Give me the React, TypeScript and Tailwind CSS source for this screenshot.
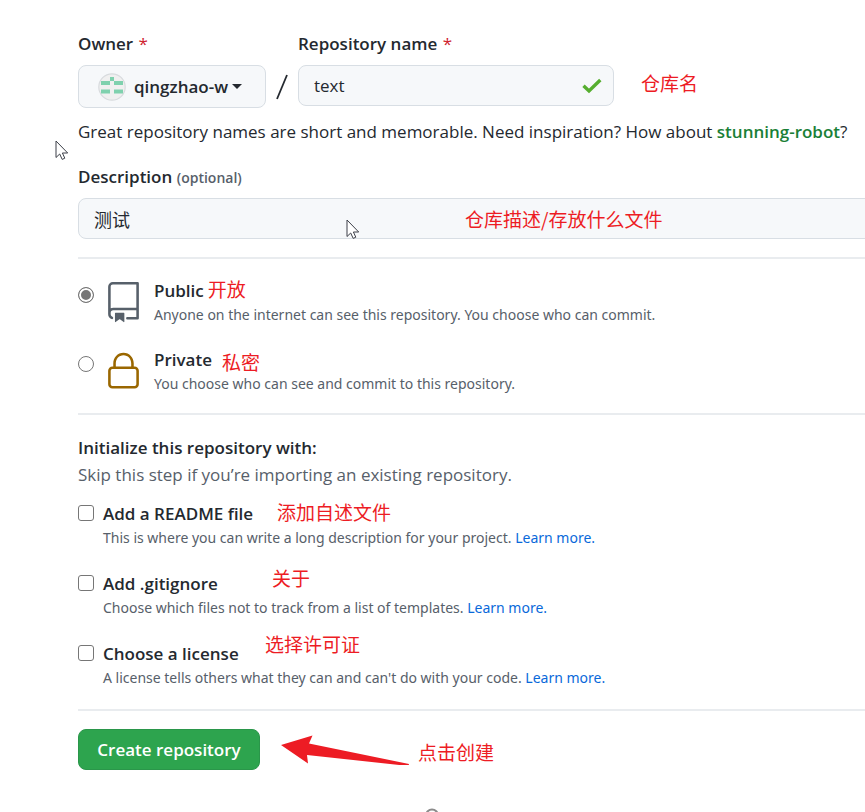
import React, { useState } from 'react';
import clsx from 'clsx';

interface NoteProps {
  children: React.ReactNode;
  className?: string;
}

const VISIBILITIES = [
  {
    value: 'public',
    label: 'Public',
    description: 'Anyone on the internet can see this repository. You choose who can commit.',
    note: '开放',
    noteClass: 'ml-1 pb-1'
  },
  {
    value: 'private',
    label: 'Private',
    description: 'You choose who can see and commit to this repository.',
    note: '私密',
    noteClass: 'ml-[10px] pt-1'
  }
];

const INIT_OPTIONS = [
  {
    id: 'readme',
    label: 'Add a README file',
    description: 'This is where you can write a long description for your project.',
    note: '添加自述文件',
    noteClass: 'left-[174px] top-0'
  },
  {
    id: 'gitignore',
    label: 'Add .gitignore',
    description: 'Choose which files not to track from a list of templates.',
    note: '关于',
    noteClass: 'left-[169px] -top-1'
  },
  {
    id: 'license',
    label: 'Choose a license',
    description: "A license tells others what they can and can't do with your code.",
    note: '选择许可证',
    noteClass: 'left-[162px] -top-2'
  }
];

const Note: React.FC<NoteProps> = ({ children, className }) => (
  <span
    className={clsx(
      'whitespace-nowrap font-["Noto_Sans_CJK_SC",sans-serif] text-[19px] leading-6 font-normal text-[#ed1c24]',
      className
    )}
  >
    {children}
  </span>
);

const Cursor: React.FC<{ className: string }> = ({ className }) => (
  <svg className={clsx('pointer-events-none absolute', className)} width="14" height="21" viewBox="0 0 14 21">
    <path
      d="M1 1v16.5l3.7-3.5 2.5 5.4 2.6-1.2-2.4-5.2h5.3z"
      fill="#fff"
      stroke="#3c3f48"
      strokeWidth="1"
      strokeLinejoin="round"
    />
  </svg>
);

const Avatar = () => (
  <svg width="28" height="28" viewBox="0 0 28 28" className="shrink-0">
    <circle cx="14" cy="14" r="13.2" fill="#f0f0f0" stroke="#d8dbde" strokeWidth="1.2" />
    <path d="M12 4h4v4h-4zM3 8h9v4H3zM16 8h9v4h-9zM3 16.5h9v4H3zM16 16.5h9v4h-9z" fill="#7fd1ae" />
  </svg>
);

const RepoIcon = () => (
  <svg width="41" height="41" viewBox="0 0 24 24" fill="#57606a">
    <path
      fillRule="evenodd"
      d="M3 2.75A2.75 2.75 0 015.75 0h14.5a.75.75 0 01.75.75v20.5a.75.75 0 01-.75.75h-6a.75.75 0 010-1.5h5.25v-4H6A1.5 1.5 0 004.5 18v.75c0 .716.43 1.334 1.05 1.605a.75.75 0 01-.6 1.374A3.25 3.25 0 013 18.75v-16zM19.5 1.5V15H6c-.546 0-1.059.146-1.5.401V2.75c0-.69.56-1.25 1.25-1.25H19.5z"
    />
    <path d="M7 18.25a.25.25 0 01.25-.25h5a.25.25 0 01.25.25v5.01a.25.25 0 01-.397.201l-2.206-1.604a.25.25 0 00-.294 0L7.397 23.46a.25.25 0 01-.397-.2v-5.01z" />
  </svg>
);

const LockIcon = () => (
  <svg width="41" height="41" viewBox="0 0 24 24" fill="#9a6700">
    <path
      fillRule="evenodd"
      d="M6 9V7.25C6 3.845 8.503 1 12 1s6 2.845 6 6.25V9h.5a2.5 2.5 0 012.5 2.5v8a2.5 2.5 0 01-2.5 2.5h-13A2.5 2.5 0 013 19.5v-8A2.5 2.5 0 015.5 9H6zm1.5-1.75C7.5 4.58 9.422 2.5 12 2.5c2.578 0 4.5 2.08 4.5 4.75V9h-9V7.25zm-3 4.25a1 1 0 011-1h13a1 1 0 011 1v8a1 1 0 01-1 1h-13a1 1 0 01-1-1v-8z"
    />
  </svg>
);

export default function App() {
  const [name, setName] = useState('text');
  const [description, setDescription] = useState('测试');
  const [visibility, setVisibility] = useState('public');

  return (
    <main className='relative min-h-screen overflow-hidden bg-white pt-[30px] pl-[78px] font-["Open_Sans","Noto_Sans_CJK_SC",sans-serif] text-[17px] leading-[27px] text-[#24292f]'>
      <form onSubmit={e => e.preventDefault()}>
        <div className="flex items-start">
          <div className="w-[188px] shrink-0">
            <label htmlFor="owner" className="block font-semibold">
              Owner <span className="ml-px font-normal text-[#cf222e]">*</span>
            </label>
            <button
              id="owner"
              type="button"
              className="mt-2 flex h-[43px] w-full items-center rounded-lg border border-[#d8dee4] bg-[#f6f8fa] pl-[19px] font-semibold"
            >
              <Avatar />
              <span className="ml-2">qingzhao-w</span>
              <svg width="10" height="5" viewBox="0 0 10 5" className="ml-1 shrink-0">
                <path d="M0 0h10L5 5z" fill="#24292f" />
              </svg>
            </button>
          </div>

          <svg width="12" height="26" viewBox="0 0 12 26" className="mx-[10px] mt-11 shrink-0">
            <path d="M1 25L11 1" stroke="#24292f" strokeWidth="1.8" />
          </svg>

          <div className="w-[316px] shrink-0">
            <label htmlFor="name" className="block font-semibold">
              Repository name <span className="ml-px font-normal text-[#cf222e]">*</span>
            </label>
            <div className="relative mt-2">
              <input
                id="name"
                type="text"
                value={name}
                onChange={e => setName(e.target.value)}
                className="h-[41px] w-full rounded-lg border border-[#d8dee4] bg-[#f6f8fa] px-[15px]"
              />
              <svg width="20" height="16" viewBox="0 0 20 16" className="absolute top-[13px] right-3">
                <path d="M1.5 7.8L7 13 18.3 2" fill="none" stroke="#56ae2f" strokeWidth="3.4" />
              </svg>
            </div>
          </div>

          <Note className="mt-[41px] ml-[27px]">仓库名</Note>
        </div>

        <p className="mt-[10px] whitespace-nowrap">
          Great repository names are short and memorable. Need inspiration? How about{' '}
          <strong className="font-semibold text-[#1a7f37]">stunning-robot</strong>?
        </p>

        <label htmlFor="description" className="mt-[18px] block font-semibold">
          Description <span className="text-sm text-[#57606a]">(optional)</span>
        </label>
        <div className="relative mt-2 -mr-3">
          <input
            id="description"
            type="text"
            value={description}
            onChange={e => setDescription(e.target.value)}
            className="block h-[41px] w-full rounded-lg border border-[#d8dee4] bg-[#f6f8fa] px-[15px] text-lg"
          />
          <Note className="absolute top-[9px] left-[387px]">仓库描述/存放什么文件</Note>
        </div>

        <fieldset className="mt-[18px] border-t-2 border-[#e9ecef] pt-[18px]">
          <div className="flex flex-col gap-5">
            {VISIBILITIES.map(item => (
              <div key={item.value} className="flex items-start">
                <input
                  id={item.value}
                  type="radio"
                  name="visibility"
                  checked={visibility === item.value}
                  onChange={() => setVisibility(item.value)}
                  className="mt-[10px] size-4 shrink-0 appearance-none rounded-full border border-[#767676] bg-white checked:border-[#767676] checked:bg-[#767676] checked:shadow-[inset_0_0_0_2px_#fff]"
                />
                <div className="mt-[5px] ml-[9px] h-[43px] w-[41px] shrink-0">
                  {item.value === 'public' ? <RepoIcon /> : <LockIcon />}
                </div>
                <div className="ml-[10px] whitespace-nowrap">
                  <div className="flex h-[27px] items-center">
                    <label htmlFor={item.value} className="font-semibold">
                      {item.label}
                    </label>
                    <Note className={item.noteClass}>{item.note}</Note>
                  </div>
                  <p className='font-["Noto_Sans",sans-serif] text-sm leading-[22px] text-[#57606a]'>
                    {item.description}
                  </p>
                </div>
              </div>
            ))}
          </div>
        </fieldset>

        <section className="mt-[18px] border-t-2 border-[#e9ecef] pt-[19px]">
          <h2 className="font-semibold">Initialize this repository with:</h2>
          <p className="text-[#57606a]">Skip this step if you’re importing an existing repository.</p>
          <div className="mt-3 flex flex-col gap-[21px]">
            {INIT_OPTIONS.map(option => (
              <div key={option.id} className="flex items-start">
                <input
                  id={option.id}
                  type="checkbox"
                  className="mt-[5px] size-4 shrink-0 appearance-none rounded-[3px] border border-[#767676] bg-white checked:bg-[#0969da]"
                />
                <div className="relative ml-[9px] whitespace-nowrap">
                  <label htmlFor={option.id} className="block font-semibold">
                    {option.label}
                  </label>
                  <Note className={clsx('absolute', option.noteClass)}>{option.note}</Note>
                  <p className='font-["Noto_Sans",sans-serif] text-sm leading-[22px] text-[#57606a]'>
                    {option.description}{' '}
                    <a href="#" className="text-[#0969da]">
                      Learn more.
                    </a>
                  </p>
                </div>
              </div>
            ))}
          </div>
        </section>

        <div className="mt-5 flex items-start border-t-2 border-[#e9ecef] pt-[18px]">
          <button
            type="submit"
            className="h-[41px] w-[182px] shrink-0 rounded-lg border border-[#2a964a] bg-[#2da44e] font-semibold whitespace-nowrap text-white"
          >
            Create repository
          </button>
          <svg width="129" height="31" viewBox="0 0 129 31" className="mt-[5px] ml-[21px] shrink-0">
            <path d="M0 11L31.5 1.5 28 9.5 128 30 127.5 32 26 21 27 29.5z" fill="#ed1c24" />
          </svg>
          <Note className="mt-[11px] ml-2">点击创建</Note>
        </div>
      </form>

      <Cursor className="top-[140px] left-[55px]" />
      <Cursor className="top-[219px] left-[346px]" />
      <svg width="14" height="4" viewBox="0 0 14 4" className="absolute bottom-0 left-[425px]">
        <circle cx="7" cy="7.5" r="6" fill="none" stroke="#8b8b8b" strokeWidth="2" />
      </svg>
    </main>
  );
}
